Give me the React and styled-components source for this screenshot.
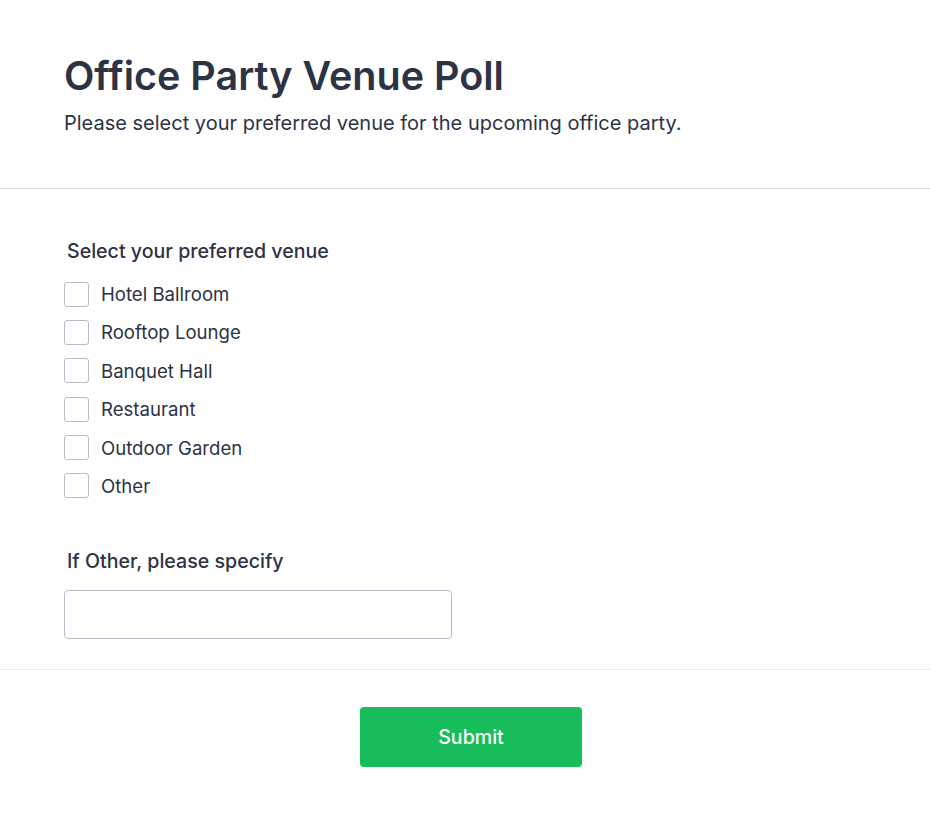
import React from "react";
import styled, { createGlobalStyle } from "styled-components";

const Global = createGlobalStyle`
  html, body { margin: 0; padding: 0; background: #ffffff; }
  body { font-family: Inter, "Noto Sans", sans-serif; color: #2c3345; }
  * { box-sizing: border-box; }
`;

const Page = styled.div`
  width: 100%;
  display: flex;
  flex-direction: column;
`;

const Header = styled.header`
  padding: 52px 64px 52px;
  border-bottom: 1px solid #d8dae5;
`;

const Title = styled.h1`
  margin: 0;
  font-size: 39.5px;
  line-height: 48px;
  font-weight: 600;
  color: #2c3345;
`;

const Subtitle = styled.p`
  margin: 10px 0 0;
  font-size: 20px;
  line-height: 26px;
  font-weight: 400;
  color: #2c3345;
`;

const Body = styled.section`
  padding: 49px 64px 30px;
  border-bottom: 1px solid #e8eaf0;
  display: flex;
  flex-direction: column;
`;

const Field = styled.div`
  display: flex;
  flex-direction: column;
  margin-bottom: ${(p) => p.$mb || 0}px;
`;

const FieldLabel = styled.label`
  padding-left: 3px;
  font-size: 19.6px;
  line-height: 26px;
  font-weight: 500;
  color: #2c3345;
  margin-bottom: ${(p) => p.$mb}px;
`;

const Options = styled.div`
  display: flex;
  flex-direction: column;
  gap: 14.4px;
`;

const Option = styled.label`
  display: flex;
  align-items: center;
  gap: 12px;
  height: 24px;
  font-size: 18.6px;
  color: #2c3345;
  cursor: pointer;
`;

const Box = styled.input.attrs({ type: "checkbox" })`
  appearance: none;
  margin: 0;
  width: 25px;
  height: 25px;
  border: 1px solid #b8bdc9;
  border-radius: 3px;
  background: #fff;
`;

const TextInput = styled.input`
  width: 388px;
  height: 49px;
  border: 1px solid #b8bdc9;
  border-radius: 4px;
  padding: 0 12px;
  font-size: 16px;
  font-family: inherit;
`;

const Footer = styled.footer`
  display: flex;
  justify-content: center;
  padding: 37px 0 49px 12px;
`;

const SubmitButton = styled.button`
  width: 222px;
  height: 60px;
  border: none;
  border-radius: 4px;
  background: #18bd5b;
  color: #ffffff;
  font-family: inherit;
  font-size: 19.6px;
  font-weight: 500;
  cursor: pointer;
`;

const venues = [
  "Hotel Ballroom",
  "Rooftop Lounge",
  "Banquet Hall",
  "Restaurant",
  "Outdoor Garden",
  "Other",
];

export default function App() {
  return (
    <>
      <Global />
      <Page>
        <Header>
          <Title>Office Party Venue Poll</Title>
          <Subtitle>Please select your preferred venue for the upcoming office party.</Subtitle>
        </Header>
        <Body>
          <Field $mb={50}>
            <FieldLabel $mb={18}>Select your preferred venue</FieldLabel>
            <Options>
              {venues.map((v) => (
                <Option key={v}>
                  <Box />
                  {v}
                </Option>
              ))}
            </Options>
          </Field>
          <Field>
            <FieldLabel $mb={16}>If Other, please specify</FieldLabel>
            <TextInput type="text" />
          </Field>
        </Body>
        <Footer>
          <SubmitButton>Submit</SubmitButton>
        </Footer>
      </Page>
    </>
  );
}
